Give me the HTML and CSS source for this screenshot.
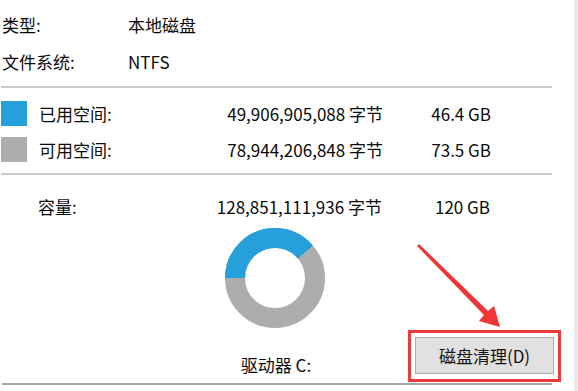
FILE: index.html
```html
<!DOCTYPE html>
<html lang="zh-CN">
<head>
    <meta charset="UTF-8">
    <meta name="viewport" content="width=device-width, initial-scale=1.0">
    <title>本地磁盘 (C:) 属性</title>
    <link rel="stylesheet" href="styles.css">
</head>
<body>
    <div class="window">
        <div class="panel">
            <div class="info-row">
                <span class="label">类型:</span>
                <span>本地磁盘</span>
            </div>
            <div class="info-row">
                <span class="label">文件系统:</span>
                <span>NTFS</span>
            </div>

            <div class="divider"></div>

            <div class="space-row">
                <span class="swatch used"></span>
                <span>已用空间:</span>
                <span class="bytes">49,906,905,088 字节</span>
                <span class="size">46.4 GB</span>
            </div>
            <div class="space-row">
                <span class="swatch free"></span>
                <span>可用空间:</span>
                <span class="bytes">78,944,206,848 字节</span>
                <span class="size">73.5 GB</span>
            </div>

            <div class="divider"></div>

            <div class="space-row capacity">
                <span></span>
                <span>容量:</span>
                <span class="bytes">128,851,111,936 字节</span>
                <span class="size">120 GB</span>
            </div>

            <div class="chart">
                <svg class="donut" width="100" height="100" viewBox="0 0 100 100">
                    <circle cx="50" cy="50" r="40" fill="none" stroke="#adadad" stroke-width="20"/>
                    <circle cx="50" cy="50" r="40" fill="none" stroke="#26a0da" stroke-width="20"
                            stroke-dasharray="97.2 251.3" transform="rotate(180 50 50)"/>
                </svg>
            </div>

            <div class="footer">
                <span></span>
                <span class="drive-name">驱动器 C:</span>
                <span class="highlight">
                    <button class="btn">磁盘清理(D)</button>
                </span>
            </div>

            <div class="divider bottom"></div>

            <!-- annotation arrow pointing at the button -->
            <svg class="arrow" width="578" height="391" viewBox="0 0 578 391">
                <polygon fill="#f03535" points="417,246 419,244 488,311 494,306 500,327 479,321 484,315"/>
            </svg>
        </div>
    </div>
</body>
</html>
```

FILE: styles.css
```css
body {
    margin: 0;
    background: #fff;
    font-family: "Noto Sans CJK SC", "Noto Sans", sans-serif;
    font-size: 17px;
    color: #0a0a0a;
}

.window {
    width: 574px;
    height: 391px;
    border-right: 4px solid #e8e8e8;
    overflow: hidden;
}

.panel {
    position: relative;
    width: 552px;
    padding-top: 6px;
}

.info-row {
    display: grid;
    grid-template-columns: 126px 1fr;
    align-items: center;
    height: 37px;
    padding-left: 2px;
}

.divider {
    height: 2px;
    background: #cacaca;
    margin: 6px 0 7px 1px;
}

.space-row {
    display: grid;
    grid-template-columns: 38px 90px 254px 108px;
    align-items: center;
    height: 36px;
    padding-left: 1px;
}

.space-row.capacity {
    margin-top: 13px;
    padding-left: 0;
}

.swatch {
    width: 26px;
    height: 25px;
}

.swatch.used {
    background: #26a0da;
}

.swatch.free {
    background: #adadad;
}

.bytes,
.size {
    text-align: right;
}

.chart {
    display: flex;
    justify-content: center;
    margin-top: 4px;
    padding-right: 2px;
}

.donut {
    display: block;
}

.footer {
    display: grid;
    grid-template-columns: 1fr auto 1fr;
    align-items: end;
    margin-top: 2px;
}

.drive-name {
    line-height: 24px;
    margin-bottom: 5px;
}

.highlight {
    justify-self: end;
    margin-right: -9px;
    padding: 4px 4px 5px;
    border: 3px solid #ec3a3a;
    display: flex;
}

.btn {
    width: 139px;
    height: 37px;
    background: #e1e1e1;
    border: 1px solid #adadad;
    font-family: inherit;
    font-size: 17px;
    color: #111;
    padding: 0;
}

.divider.bottom {
    background: #a8a8a8;
    margin: 1px 0 0 2px;
}

.arrow {
    position: absolute;
    left: 0;
    top: 0;
    pointer-events: none;
}
```
